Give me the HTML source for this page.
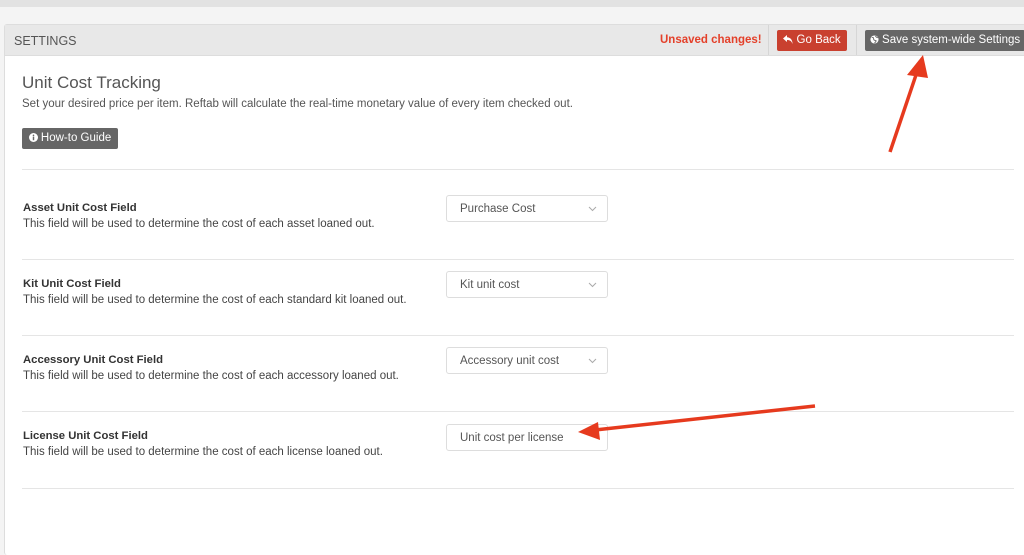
<!DOCTYPE html>
<html><head><style>
body{margin:0;width:1024px;height:539px;overflow:hidden;background:#f4f4f4;font-family:"Liberation Sans",sans-serif;position:relative}
.top{position:absolute;left:0;top:0;width:1024px;height:7px;background:#e2e2e2}
.panel{position:absolute;left:4px;top:24px;width:1030px;height:530px;background:#fff;border:1px solid #ddd;border-bottom:0;border-radius:3px}
.hdr{position:absolute;left:0;top:0;right:0;height:30px;background:#e8e8e8;border-bottom:1px solid #ddd}
.abs{position:absolute}
.t{color:#555}
.btn{position:absolute;height:21px;border-radius:2px;color:#fff;font-size:11.5px;line-height:21px;text-align:center}
.btn svg{vertical-align:-1px}
.sep{position:absolute;top:0;width:1px;height:30px;background:#d6d6d6}
hr{position:absolute;left:22px;width:992px;margin:0;border:0;border-top:1px solid #e5e5e5}
.lbl{position:absolute;left:23px;font-size:11.3px;font-weight:bold;color:#333}
.desc{position:absolute;left:23px;font-size:11.5px;color:#444}
.sel{position:absolute;left:446px;width:162px;height:27px;border:1px solid #ddd;border-radius:3px;font-size:11.5px;color:#555;line-height:26px;box-sizing:border-box;padding-left:13px;background:#fff}
.sel svg{position:absolute;right:10px;top:10px}
</style></head><body>
<div class="top"></div>
<div class="panel"><div class="hdr">
<div class="abs t" style="left:9px;top:9px;font-size:12.5px">SETTINGS</div>
<div class="abs" style="left:655px;top:9px;font-size:11.5px;font-weight:bold;color:#e4402a">Unsaved changes!</div>
<div class="sep" style="left:763px"></div><div class="sep" style="left:851px"></div>
<div class="btn" style="left:772px;top:5px;width:70px;background:#c9402f"><svg width="10" height="9" viewBox="0 0 10 9"><path d="M4 0L0 3.5L4 7V5C7 5 8.5 6 9.5 9C9.5 5 7.5 2.5 4 2.3Z" fill="#fff"/></svg> Go Back</div>
<div class="btn" style="left:860px;top:5px;width:160px;background:#666"><svg width="9" height="9" viewBox="0 0 10 10"><circle cx="5" cy="5" r="4.5" fill="#fff"/><path d="M2 3Q4 2 4 4T6 6T5 9M6 1Q7 3 9 3" stroke="#666" fill="none"/></svg> Save system-wide Settings</div>
</div></div>
<div class="abs" style="left:22px;top:73px;font-size:17px;color:#555">Unit Cost Tracking</div>
<div class="abs" style="left:22px;top:98px;font-size:11.5px;color:#555">Set your desired price per item. Reftab will calculate the real-time monetary value of every item checked out.</div>
<div class="btn" style="left:22px;top:128px;width:96px;background:#666"><svg width="9" height="9" viewBox="0 0 10 10"><circle cx="5" cy="5" r="5" fill="#fff"/><rect x="4.2" y="4" width="1.6" height="4" fill="#666"/><circle cx="5" cy="2.6" r="0.9" fill="#666"/></svg> How-to Guide</div>
<hr style="top:169px"><hr style="top:259px"><hr style="top:335px"><hr style="top:411px"><hr style="top:488px">
<div class="lbl" style="top:202px">Asset Unit Cost Field</div><div class="desc" style="top:218px">This field will be used to determine the cost of each asset loaned out.</div>
<div class="sel" style="top:195px">Purchase Cost<svg width="9" height="6"><path d="M1 1L4.5 4.5L8 1" stroke="#aaa" fill="none"/></svg></div>
<div class="lbl" style="top:278px">Kit Unit Cost Field</div><div class="desc" style="top:294px">This field will be used to determine the cost of each standard kit loaned out.</div>
<div class="sel" style="top:271px">Kit unit cost<svg width="9" height="6"><path d="M1 1L4.5 4.5L8 1" stroke="#aaa" fill="none"/></svg></div>
<div class="lbl" style="top:354px">Accessory Unit Cost Field</div><div class="desc" style="top:370px">This field will be used to determine the cost of each accessory loaned out.</div>
<div class="sel" style="top:347px">Accessory unit cost<svg width="9" height="6"><path d="M1 1L4.5 4.5L8 1" stroke="#aaa" fill="none"/></svg></div>
<div class="lbl" style="top:430px">License Unit Cost Field</div><div class="desc" style="top:446px">This field will be used to determine the cost of each license loaned out.</div>
<div class="sel" style="top:424px">Unit cost per license</div>
<svg class="abs" style="left:0;top:0" width="1024" height="539">
<path d="M890 152L917 72" stroke="#e63a1e" stroke-width="3.5" fill="none"/>
<path d="M923 55L907 75L928 78Z" fill="#e63a1e"/>
<path d="M815 406L595 430" stroke="#e63a1e" stroke-width="3.5" fill="none"/>
<path d="M578 432L598 422L600 440Z" fill="#e63a1e"/>
</svg>
</body></html>
